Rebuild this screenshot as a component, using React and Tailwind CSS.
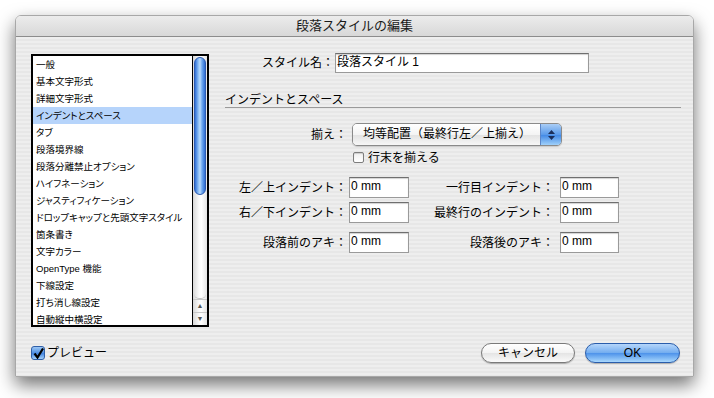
const items = [
  "一般",
  "基本文字形式",
  "詳細文字形式",
  "インデントとスペース",
  "タブ",
  "段落境界線",
  "段落分離禁止オプション",
  "ハイフネーション",
  "ジャスティフィケーション",
  "ドロップキャップと先頭文字スタイル",
  "箇条書き",
  "文字カラー",
  "OpenType 機能",
  "下線設定",
  "打ち消し線設定",
  "自動縦中横設定",
]

function TextField({ value, className }) {
  return (
    <div
      className={`h-[21px] bg-white border border-[#9a9a9a] border-t-[#6f6f6f] shadow-[inset_0_1px_1px_rgba(0,0,0,0.18)] pl-[1px] text-[12px] leading-[17px] ${className}`}
    >
      {value}
    </div>
  )
}

function IndentRow({ left, right, className }) {
  return (
    <div className={`flex items-center h-[21px] ${className}`}>
      <div className="w-[122px] text-right text-[12px] leading-[14px]">{left}</div>
      <TextField value="0 mm" className="ml-[2px] w-[60px]" />
      <div className="w-[145px] text-right text-[12px] leading-[14px]">{right}</div>
      <TextField value="0 mm" className="ml-[6px] w-[59px]" />
    </div>
  )
}

export default function App() {
  return (
    <div className="w-[714px] h-[398px] bg-white pt-[15px] pl-[15px] font-['Liberation_Sans','Noto_Sans_CJK_JP',sans-serif] text-black">
      <div className="w-[679px] h-[362px] flex flex-col rounded-t-[6px] border border-[#a8a8a8] shadow-[0_8px_18px_rgba(0,0,0,0.55)] overflow-hidden">
        {/* title bar */}
        <div className="h-[21px] shrink-0 flex items-center justify-center bg-[linear-gradient(#ececec,#d8d8d8)] border-b border-[#8c8c8c] text-[13px] text-[#1a1a1a]">
          段落スタイルの編集
        </div>

        {/* body */}
        <div className="flex-1 flex flex-col pl-[15px] pr-[12px] pt-[16px] bg-[repeating-linear-gradient(180deg,#eeeeee_0px,#eeeeee_2px,#e7e7e7_2px,#e7e7e7_4px)]">
          <div className="flex">
            {/* category list */}
            <div className="mt-[1px] w-[178px] h-[273px] border-2 border-black bg-white flex overflow-hidden">
              <div className="flex-1 overflow-hidden text-[9.5px] leading-[17px] [font-feature-settings:'palt']">
                {items.map((it, i) => (
                  <div
                    key={it}
                    className={`h-[17px] pl-[3px] whitespace-nowrap ${i === 3 ? "bg-[#b6d4fb]" : ""}`}
                  >
                    {it}
                  </div>
                ))}
              </div>
              <div className="w-[15px] border-l border-black flex flex-col bg-[linear-gradient(90deg,#d8d8d8,#fbfbfb_45%,#ffffff_60%,#e4e4e4)]">
                <div className="mx-[1px] mt-[1px] h-[138px] rounded-full border border-[#2c5ab0] bg-[linear-gradient(90deg,#2f6fd6,#8fc0f6_35%,#b8dafc_50%,#6ea7ee_70%,#2f6ed4)]" />
                <div className="flex-1" />
                <div className="h-[5px] rounded-b-full border-b border-[#c4c4c4] mx-[1px]" />
                <div className="h-[13px] border-t border-[#c8c8c8] flex items-center justify-center text-[7px] text-[#555]">▲</div>
                <div className="h-[13px] border-t border-[#c8c8c8] flex items-center justify-center text-[7px] text-[#555]">▼</div>
              </div>
            </div>

            {/* form */}
            <div className="ml-[16px] flex-1 flex flex-col">
              <div className="flex items-center h-[20px]">
                <div className="w-[109px] text-right text-[12px] leading-[14px]">スタイル名：</div>
                <TextField value="段落スタイル 1" className="ml-[1px] w-[254px] !h-[20px]" />
              </div>

              <div className="mt-[20px] h-[15px] border-b border-[#9a9a9a] text-[12px] leading-[14px]">
                インデントとスペース
              </div>

              <div className="mt-[15px] flex items-center h-[23px]">
                <div className="w-[122px] text-right text-[12px] leading-[14px]">揃え：</div>
                <div className="ml-[5px] w-[210px] h-[23px] flex rounded-[5px] border border-[#8a8a8a] overflow-hidden shadow-[0_1px_1px_rgba(0,0,0,0.15)]">
                  <div className="flex-1 pl-[10px] text-[12px] leading-[21px] bg-[linear-gradient(#ffffff,#f4f4f4_50%,#e2e2e2_51%,#f7f7f7)]">
                    均等配置（最終行左／上揃え）
                  </div>
                  <div className="w-[21px] border-l border-[#5b86c9] flex flex-col items-center justify-center gap-[2px] bg-[linear-gradient(#a9cdf6,#5b9bea_50%,#3f86e4_51%,#9fd0fa)]">
                    <svg width="7" height="4" viewBox="0 0 7 4"><path d="M0 4 L3.5 0 L7 4 Z" fill="#1b2f5a" /></svg>
                    <svg width="7" height="4" viewBox="0 0 7 4"><path d="M0 0 L3.5 4 L7 0 Z" fill="#1b2f5a" /></svg>
                  </div>
                </div>
              </div>

              <div className="mt-[6px] ml-[128px] flex items-center h-[11px]">
                <div className="w-[11px] h-[11px] rounded-[2px] border border-[#7d7d7d] bg-[linear-gradient(#f0f0f0,#ffffff)] shadow-[inset_0_1px_1px_rgba(0,0,0,0.15)]" />
                <div className="ml-[4px] text-[12px] leading-[14px]">行末を揃える</div>
              </div>

              <IndentRow left="左／上インデント：" right="一行目インデント：" className="mt-[14px]" />
              <IndentRow left="右／下インデント：" right="最終行のインデント：" className="mt-[4px]" />
              <IndentRow left="段落前のアキ：" right="段落後のアキ：" className="mt-[9px]" />
            </div>
          </div>

          {/* footer */}
          <div className="mt-[16px] h-[20px] flex items-center">
            <div className="w-[14px] h-[14px] rounded-[3px] border border-[#2f5fa8] bg-[linear-gradient(#9cc7f5,#4f8fe2_50%,#3c7fde_51%,#a5d2fb)] flex items-center justify-center">
              <svg width="11" height="11" viewBox="0 0 11 11">
                <path d="M1.5 5.5 L4.5 9.5 L10 0.5" stroke="#000" strokeWidth="2.2" fill="none" />
              </svg>
            </div>
            <div className="ml-[2px] text-[12px] leading-[14px]">プレビュー</div>
            <div className="flex-1" />
            <button className="w-[94px] h-[20px] rounded-full border border-[#7a7a7a] bg-[linear-gradient(#ffffff,#f3f3f3_50%,#e4e4e4_51%,#fafafa)] shadow-[0_1px_1px_rgba(0,0,0,0.25)] text-[12px] leading-[18px]">
              キャンセル
            </button>
            <button className="ml-[10px] mr-[1px] w-[95px] h-[20px] rounded-full border border-[#2a5dab] bg-[linear-gradient(#b5d6fb,#72acef_50%,#4d92ea_51%,#a9d8fd)] shadow-[0_1px_1px_rgba(0,0,0,0.25)] text-[12px] leading-[18px]">
              OK
            </button>
          </div>
        </div>
      </div>
    </div>
  )
}
